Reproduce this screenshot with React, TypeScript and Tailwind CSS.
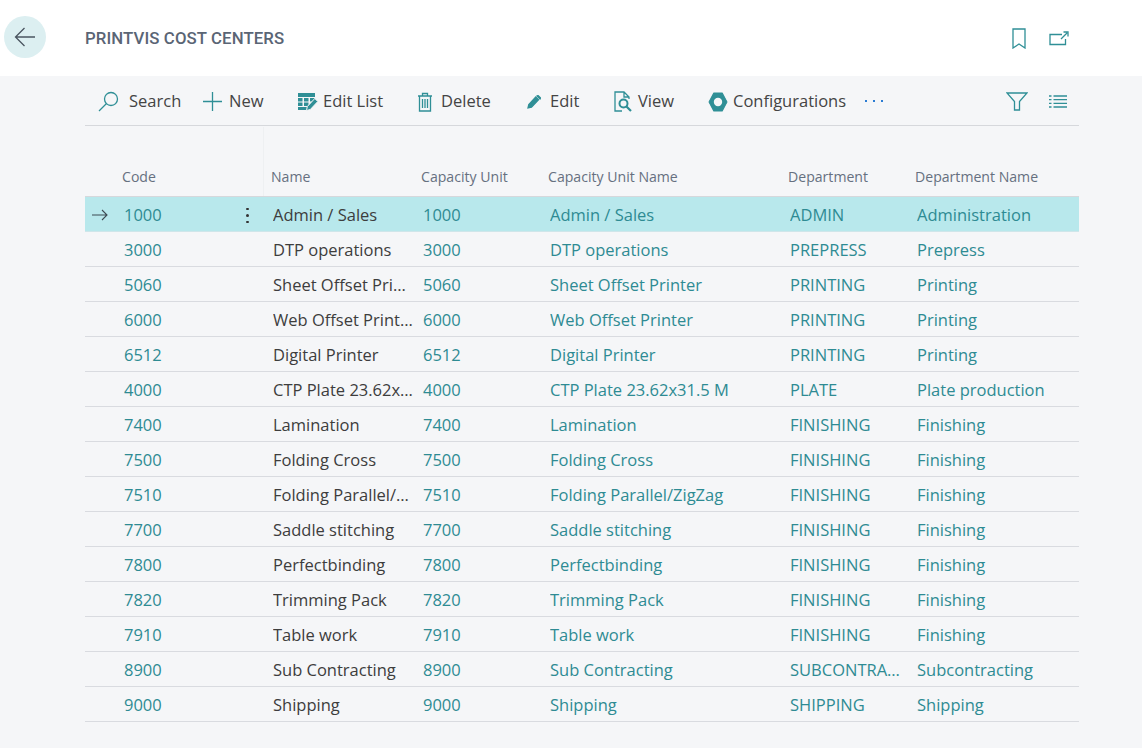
const rows = [
  ["1000", "Admin / Sales", "1000", "Admin / Sales", "ADMIN", "Administration"],
  ["3000", "DTP operations", "3000", "DTP operations", "PREPRESS", "Prepress"],
  ["5060", "Sheet Offset Printer", "5060", "Sheet Offset Printer", "PRINTING", "Printing"],
  ["6000", "Web Offset Printer", "6000", "Web Offset Printer", "PRINTING", "Printing"],
  ["6512", "Digital Printer", "6512", "Digital Printer", "PRINTING", "Printing"],
  ["4000", "CTP Plate 23.62x31.5 M", "4000", "CTP Plate 23.62x31.5 M", "PLATE", "Plate production"],
  ["7400", "Lamination", "7400", "Lamination", "FINISHING", "Finishing"],
  ["7500", "Folding Cross", "7500", "Folding Cross", "FINISHING", "Finishing"],
  ["7510", "Folding Parallel/ZigZag", "7510", "Folding Parallel/ZigZag", "FINISHING", "Finishing"],
  ["7700", "Saddle stitching", "7700", "Saddle stitching", "FINISHING", "Finishing"],
  ["7800", "Perfectbinding", "7800", "Perfectbinding", "FINISHING", "Finishing"],
  ["7820", "Trimming Pack", "7820", "Trimming Pack", "FINISHING", "Finishing"],
  ["7910", "Table work", "7910", "Table work", "FINISHING", "Finishing"],
  ["8900", "Sub Contracting", "8900", "Sub Contracting", "SUBCONTRACTING", "Subcontracting"],
  ["9000", "Shipping", "9000", "Shipping", "SHIPPING", "Shipping"],
];

const Ic = ({ w, h, children }: { w: number; h: number; children: React.ReactNode }) => (
  <svg width={w} height={h} viewBox={`0 0 ${w} ${h}`} fill="none" stroke="#2f8f96" strokeWidth="1.3" className="shrink-0">
    {children}
  </svg>
);

function Tool({ icon, label, className }: { icon: React.ReactNode; label: string; className: string }) {
  return (
    <div className={`flex items-center ${className}`}>
      {icon}
      <span>{label}</span>
    </div>
  );
}

const grid = "grid grid-cols-[39px_149px_150px_127px_240px_127px_162px]";

export default function App() {
  return (
    <div className="w-[1142px] h-[748px] overflow-hidden bg-[#f5f6f8] font-['Open_Sans','Noto_Sans',sans-serif] text-[#3d3d3d]">
      <header className="h-[76px] bg-white flex items-center pl-[4px] pr-[73px]">
        <div className="w-[42px] h-[42px] rounded-full bg-[#dceff1] flex items-center justify-center mb-[2px]">
          <svg width="22" height="20" viewBox="0 0 22 20" fill="none" stroke="#4a5560" strokeWidth="1.3">
            <path d="M21 10H1.500M10.500 1 1.500 10l9 9" />
          </svg>
        </div>
        <h1 className="ml-[39px] mt-[1px] text-[16.800px] font-medium tracking-[0.1px] text-[#5a6575] font-['Roboto',sans-serif]">PRINTVIS COST CENTERS</h1>
        <div className="ml-auto flex items-center gap-[23px] mt-[1px]">
          <Ic w={14} h={21}>
            <path d="M1 1h12v19l-6-4-6 4z" />
          </Ic>
          <Ic w={20} h={15}>
            <path d="M13 3.500H1v10h15.500V8M12 8l6-6M14.500 1H19v4.500" />
          </Ic>
        </div>
      </header>

      <div className="mx-[85px] w-[994px] h-[50px] border-b border-[#d6d8dc] flex items-center text-[16.500px] pt-[2px] text-[#444]">
        <Tool className="ml-[13px] w-[105px] gap-[10px]" label="Search" icon={
          <Ic w={21} h={21}><circle cx="13" cy="8" r="6.500" /><path d="M8.500 12.500 1 20" /></Ic>
        } />
        <Tool className="w-[95px] gap-[7px]" label="New" icon={
          <Ic w={19} h={19}><path d="M9.500 0v19M0 9.500h19" /></Ic>
        } />
        <Tool className="w-[119px] gap-[5px]" label="Edit List" icon={
          <svg width="20" height="18" viewBox="0 0 20 18" className="shrink-0">
            <path d="M0 0h17v4H0z" fill="#2f8f96" />
            <path d="M0 5h4.500v3.500H0zM6 5h4.500v3.500H6zM12 5h4.500v3.500H12zM0 9.500h4.500V13H0zM6 9.500h4.500V13H6zM0 14h10v3H0z" fill="#2f8f96" />
            <path d="m8.500 17.500.8-4 7.500-8 3 3-7.500 8z" fill="#2f8f96" stroke="#f5f6f8" strokeWidth="1" />
          </svg>
        } />
        <Tool className="w-[110px] gap-[8px]" label="Delete" icon={
          <Ic w={16} h={20}>
            <path d="M1 4h14M5.500 4V1.500h5V4M2.500 4v15h11V4M5.500 7v9M8 7v9M10.500 7v9" />
          </Ic>
        } />
        <Tool className="w-[87px] gap-[9px]" label="Edit" icon={
          <Ic w={14} h={14}>
            <path d="m1 13 .8-3.500 7-7.500 2.700 2.700-7 7.500z" fill="#2f8f96" />
            <path d="m10 1 1-.5 2.500 2.500-.5 1z" fill="#2f8f96" />
          </Ic>
        } />
        <Tool className="w-[94px] gap-[4px]" label="View" icon={
          <Ic w={20} h={21}>
            <path d="M8 20H1V1h9l5 5v2M10 1v5h5" />
            <circle cx="9.500" cy="12.500" r="4" strokeWidth="2" />
            <path d="m12.500 15.500 4.500 4.500" strokeWidth="2.200" />
          </Ic>
        } />
        <Tool className="gap-[5px]" label="Configurations" icon={
          <svg width="20" height="20" viewBox="0 0 19 19" className="shrink-0">
            <path d="M5.500 1h8l4.500 8.500-4.500 8.500h-8L1 9.500z" fill="#2f8f96" stroke="#2f8f96" strokeLinejoin="round" strokeWidth="1" />
            <circle cx="9.500" cy="9.500" r="4" fill="#f5f6f8" />
          </svg>
        } />
        <div className="ml-[19px] flex gap-[6px] mb-[2px]">
          <span className="w-[2px] h-[2px] bg-[#2b7cd3]" />
          <span className="w-[2px] h-[2px] bg-[#2b7cd3]" />
          <span className="w-[2px] h-[2px] bg-[#2b7cd3]" />
        </div>
        <div className="ml-auto flex items-center gap-[21px] mr-[12px]">
          <Ic w={22} h={19}>
            <path d="M1 1h20l-7.500 8.500V18h-5V9.500z" />
          </Ic>
          <Ic w={18} h={13}>
            <path d="M0 1h2.500M4.500 1H18M0 4.700h2.500M4.500 4.700H18M0 8.300h2.500M4.500 8.300H18M0 12h2.500M4.500 12H18" />
          </Ic>
        </div>
      </div>

      <div className="ml-[85px] w-[994px] mt-[1px]">
        <div className={`${grid} h-[70px] items-end text-[14.100px] text-[#667080] border-b border-[#d6d8dc] pb-[9px]`}>
          <div />
          <div className="relative -ml-[2px]">
            Code
            <span className="absolute left-[141px] -bottom-[9px] h-[69px] w-px bg-[#eef0f2]" />
          </div>
          <div className="-ml-[2px]">Name</div>
          <div className="-ml-[2px]">Capacity Unit</div>
          <div className="-ml-[2px]">Capacity Unit Name</div>
          <div className="-ml-[2px]">Department</div>
          <div className="-ml-[2px]">Department Name</div>
        </div>
        {rows.map((r, i) => (
          <div key={r[0]} className={`${grid} h-[35px] items-center text-[16.500px] pt-[2px] border-b ${i === 0 ? "bg-[#b8e8ec] border-[#cfe6ea]" : "border-[#d9dbe0]"}`}>
            <div className="flex justify-start pl-[7px] pb-[1px]">
              {i === 0 && (
                <svg width="16" height="12" viewBox="0 0 16 12" fill="none" stroke="#3d4a52" strokeWidth="1.100">
                  <path d="M0 6h15M10 1l5 5-5 5" />
                </svg>
              )}
            </div>
            <div className="relative text-[#2e8b93] truncate">
              {r[0]}
              {i === 0 && (
                <span className="absolute left-[122px] top-[5px] flex flex-col gap-[4px]">
                  <span className="w-[2.500px] h-[2.500px] rounded-full bg-[#333]" />
                  <span className="w-[2.500px] h-[2.500px] rounded-full bg-[#333]" />
                  <span className="w-[2.500px] h-[2.500px] rounded-full bg-[#333]" />
                </span>
              )}
            </div>
            <div className="truncate pr-[9px] text-[#3d3d3d]">{r[1]}</div>
            <div className="text-[#2e8b93]">{r[2]}</div>
            <div className="text-[#2e8b93] truncate">{r[3]}</div>
            <div className="text-[#2e8b93] truncate pr-[10px]">{r[4]}</div>
            <div className="text-[#2e8b93] truncate">{r[5]}</div>
          </div>
        ))}
      </div>
    </div>
  );
}
